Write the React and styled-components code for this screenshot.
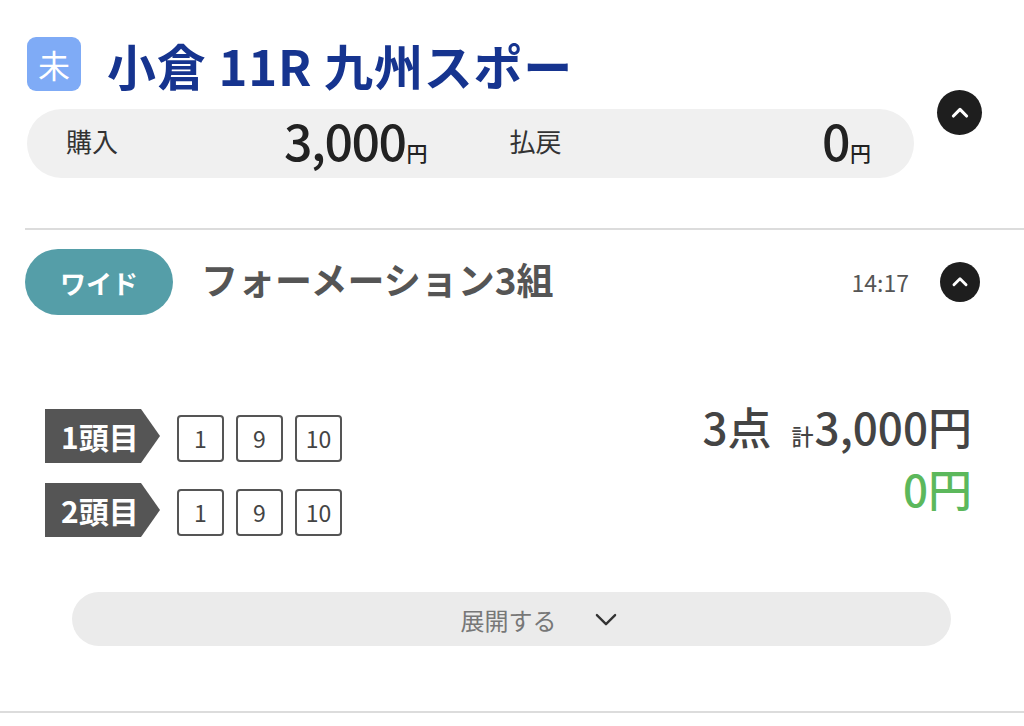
import React from "react";
import styled, { createGlobalStyle } from "styled-components";

const Global = createGlobalStyle`
  body {
    margin: 0;
    background: #fff;
    font-family: "Noto Sans CJK JP", "Noto Sans", sans-serif;
  }
`;

const Page = styled.div`
  width: 1024px;
  height: 726px;
  overflow: hidden;
  background: #fff;
`;

const RaceHeader = styled.div`
  padding: 37px 0 0 27px;
`;

const TitleRow = styled.div`
  display: flex;
  align-items: center;
  gap: 26px;
`;

const StatusBadge = styled.div`
  width: 54px;
  height: 54px;
  border-radius: 9px;
  background: #7fabf6;
  color: #fff;
  font-size: 32px;
  display: flex;
  align-items: center;
  justify-content: center;
`;

const RaceTitle = styled.h1`
  margin: 0;
  font-size: 49px;
  font-weight: 700;
  color: #16348f;
  line-height: 1;
  letter-spacing: 0.8px;
`;

const SummaryRow = styled.div`
  display: flex;
  align-items: flex-start;
  margin-top: 18px;
`;

const SummaryPill = styled.div`
  width: 887px;
  height: 69px;
  border-radius: 35px;
  background: #f0f0f0;
  display: grid;
  grid-template-columns: 1fr 1fr;
`;

const SummaryHalf = styled.div`
  display: flex;
  align-items: center;
  justify-content: space-between;
  padding: 0 43px 0 39px;
`;

const SummaryLabel = styled.span`
  font-size: 26px;
  color: #333;
  margin-top: -6px;
`;

const SummaryAmount = styled.span`
  font-size: 50px;
  font-weight: 500;
  color: #222;
  letter-spacing: -1.5px;
  display: flex;
  align-items: baseline;
  line-height: 1;
  margin-top: -9px;
`;

const Yen = styled.span`
  font-size: 21px;
  letter-spacing: 0;
  margin-left: 1px;
`;

const CircleButton = styled.button`
  all: unset;
  width: ${(p) => p.size}px;
  height: ${(p) => p.size}px;
  border-radius: 50%;
  background: #1e1e1e;
  display: flex;
  align-items: center;
  justify-content: center;
  flex-shrink: 0;
`;

const SummaryToggle = styled.div`
  margin: -19px 0 0 23px;
`;

const Divider = styled.div`
  height: 2px;
  background: #dcdcdc;
  margin-left: ${(p) => p.inset}px;
  margin-top: ${(p) => p.top}px;
`;

const BetHeader = styled.div`
  display: flex;
  align-items: center;
  padding: 19px 44px 0 25px;
`;

const BetType = styled.div`
  width: 148px;
  height: 66px;
  border-radius: 33px;
  background: #559ea8;
  color: #fff;
  font-size: 26px;
  font-weight: 700;
  display: flex;
  align-items: center;
  justify-content: center;
`;

const BetTitle = styled.div`
  margin-left: 28px;
  font-size: 37px;
  font-weight: 700;
  color: #555;
  flex: 1;
  margin-top: -6px;
`;

const BetTime = styled.div`
  font-size: 23px;
  color: #555;
  margin-right: 31px;
`;

const BetBody = styled.div`
  display: flex;
  justify-content: space-between;
  padding: 94px 52px 0 45px;
`;

const Rows = styled.div`
  display: flex;
  flex-direction: column;
  gap: 20px;
`;

const PickRow = styled.div`
  display: flex;
  align-items: center;
`;

const PickLabel = styled.div`
  width: 115px;
  height: 54px;
  background: #555;
  clip-path: polygon(0 0, 96px 0, 115px 50%, 96px 100%, 0 100%);
  color: #fff;
  font-size: 30px;
  font-weight: 700;
  display: flex;
  align-items: center;
  padding-left: 16px;
  box-sizing: border-box;
  margin-right: 17px;
`;

const NumBox = styled.div`
  width: 47px;
  height: 47px;
  box-sizing: border-box;
  border: 2px solid #555;
  border-radius: 4px;
  display: flex;
  align-items: center;
  justify-content: center;
  font-size: 23px;
  color: #444;
  margin-right: 12px;
  margin-top: 4px;
`;

const Totals = styled.div`
  display: flex;
  flex-direction: column;
  align-items: flex-end;
  margin-top: -16px;
`;

const TotalLine = styled.div`
  display: flex;
  align-items: baseline;
  font-size: 44px;
  font-weight: 500;
  color: ${(p) => p.color};
  line-height: 1.5;
  margin-top: ${(p) => p.shift || 0}px;
`;

const Small = styled.span`
  font-size: 22px;
  margin: 0 1px 0 20px;
`;

const ExpandButton = styled.button`
  all: unset;
  box-sizing: border-box;
  display: flex;
  align-items: center;
  justify-content: center;
  gap: 36px;
  width: 879px;
  height: 54px;
  margin: 55px 0 0 72px;
  border-radius: 27px;
  background: #ebebeb;
  color: #777;
  font-size: 24px;
  padding-left: 56px;
`;

const Chevron = ({ up, color = "#fff", size = 20, width = 2.6 }) => (
  <svg width={size} height={size} viewBox="0 0 20 20">
    <polyline
      points={up ? "4.5,12.5 10,7 15.5,12.5" : "3,7 10,14 17,7"}
      fill="none"
      stroke={color}
      strokeWidth={width}
      strokeLinecap="round"
      strokeLinejoin="round"
    />
  </svg>
);

const picks = [
  { label: "1頭目", nums: ["1", "9", "10"] },
  { label: "2頭目", nums: ["1", "9", "10"] },
];

export default function App() {
  return (
    <Page>
      <Global />
      <RaceHeader>
        <TitleRow>
          <StatusBadge>未</StatusBadge>
          <RaceTitle>小倉 11R 九州スポー</RaceTitle>
        </TitleRow>
        <SummaryRow>
          <SummaryPill>
            <SummaryHalf>
              <SummaryLabel>購入</SummaryLabel>
              <SummaryAmount>
                3,000<Yen>円</Yen>
              </SummaryAmount>
            </SummaryHalf>
            <SummaryHalf>
              <SummaryLabel>払戻</SummaryLabel>
              <SummaryAmount>
                0<Yen>円</Yen>
              </SummaryAmount>
            </SummaryHalf>
          </SummaryPill>
          <SummaryToggle>
            <CircleButton size={45}>
              <Chevron up size={24} />
            </CircleButton>
          </SummaryToggle>
        </SummaryRow>
      </RaceHeader>

      <Divider inset={25} top={50} />

      <BetHeader>
        <BetType>ワイド</BetType>
        <BetTitle>フォーメーション3組</BetTitle>
        <BetTime>14:17</BetTime>
        <CircleButton size={40}>
          <Chevron up size={22} />
        </CircleButton>
      </BetHeader>

      <BetBody>
        <Rows>
          {picks.map((p) => (
            <PickRow key={p.label}>
              <PickLabel>{p.label}</PickLabel>
              {p.nums.map((n) => (
                <NumBox key={n}>{n}</NumBox>
              ))}
            </PickRow>
          ))}
        </Rows>
        <Totals>
          <TotalLine color="#444">
            3点<Small>計</Small>3,000円
          </TotalLine>
          <TotalLine color="#5cb85c" shift={-4}>
            0円
          </TotalLine>
        </Totals>
      </BetBody>

      <ExpandButton>
        展開する
        <Chevron color="#333" size={26} width={1.8} />
      </ExpandButton>

      <Divider inset={0} top={65} />
    </Page>
  );
}
